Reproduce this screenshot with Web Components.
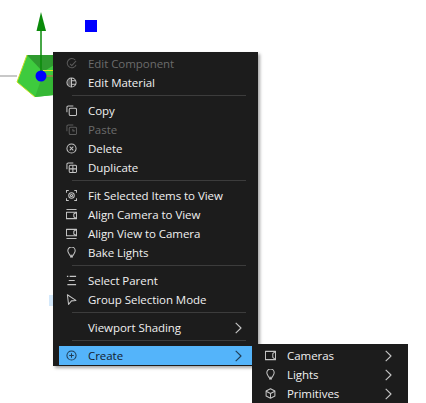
<!DOCTYPE html>
<html>
<head>
<meta charset="utf-8">
<style>
  html, body { margin: 0; background: #fff; }
  body { width: 426px; height: 403px; overflow: hidden; position: relative; font-family: "Open Sans", "Noto Sans", sans-serif; }
</style>
</head>
<body>
<scene-view></scene-view>
<context-menu style="left:53px;top:52px;width:205px">
  <menu-item icon="edit" disabled>Edit Component</menu-item>
  <menu-item icon="material">Edit Material</menu-item>
  <menu-sep></menu-sep>
  <menu-item icon="copy">Copy</menu-item>
  <menu-item icon="paste" disabled>Paste</menu-item>
  <menu-item icon="delete">Delete</menu-item>
  <menu-item icon="duplicate">Duplicate</menu-item>
  <menu-sep></menu-sep>
  <menu-item icon="fit">Fit Selected Items to View</menu-item>
  <menu-item icon="camview">Align Camera to View</menu-item>
  <menu-item icon="viewcam">Align View to Camera</menu-item>
  <menu-item icon="bulb">Bake Lights</menu-item>
  <menu-sep></menu-sep>
  <menu-item icon="parent">Select Parent</menu-item>
  <menu-item icon="group">Group Selection Mode</menu-item>
  <menu-sep></menu-sep>
  <menu-item arrow>Viewport Shading</menu-item>
  <menu-sep></menu-sep>
  <menu-item icon="create" arrow active>Create</menu-item>
</context-menu>
<context-menu style="left:252px;top:344px;width:156px" sub>
  <menu-item icon="camera" arrow>Cameras</menu-item>
  <menu-item icon="bulb" arrow>Lights</menu-item>
  <menu-item icon="cube" arrow>Primitives</menu-item>
</context-menu>
<script>
(() => {
  const ICONS = {
    edit: '<path d="M10 2.2A5 5 0 1 0 11 7.5"/><path d="M4.5 6.5 6.3 8.3 11 3.2"/>',
    material: '<circle cx="6" cy="6" r="5"/><path d="M6 1v10M6 4h4.600M6 8h4.600"/><path d="M6 1.500a4.500 4.500 0 0 0 0 9z" fill="currentColor" fill-opacity=".35" stroke="none"/>',
    copy: '<path d="M1 8V2.500A1.500 1.500 0 0 1 2.500 1H8"/><rect x="3.500" y="3.500" width="8" height="8" rx="1.500"/>',
    paste: '<path d="M1 8V2.500A1.500 1.500 0 0 1 2.500 1H8"/><rect x="3.500" y="3.500" width="8" height="8" rx="1.500"/><path d="M7.500 5.500V7.500H9.500"/>',
    delete: '<circle cx="6" cy="6" r="5"/><path d="M4 4 8 8M8 4 4 8"/>',
    duplicate: '<path d="M1 8V2.500A1.500 1.500 0 0 1 2.500 1H8"/><rect x="3.500" y="3.500" width="8" height="8" rx="1.500"/><path d="M7.500 3.500v8M3.500 7.500h8"/>',
    fit: '<path d="M.5 3V.5H3M9 .5h2.500V3M.5 9v2.500H3M9 11.500h2.500V9"/><circle cx="6" cy="6" r="3"/><circle cx="6" cy="6" r="1.200"/>',
    camview: '<path d="M.5 .5h11"/><path d="M.5 3.500h11v7H.5z"/><path d="M11.500 3.500 8.500 5.500v3l3 2"/>',
    viewcam: '<path d="M.5 11.500h11"/><path d="M.5 1.500h11v7H.5z"/><path d="M11.500 1.500 8.500 3.500v3l3 2"/>',
    bulb: '<path d="M2 4a4 4 0 0 1 8 0c0 2-1.500 3-2 5H4C3.500 7 2 6 2 4z"/><path d="M4.500 10.500h3" stroke-width="2"/>',
    parent: '<path d="M1 1.500h1.500M4 1.500h7M3 6h6.500M1.500 10.500h9.500"/>',
    group: '<path d="M1.500 .8 10.800 7 6 7.500 2.800 11.300z"/>',
    create: '<circle cx="6" cy="6" r="5"/><path d="M3.500 6h5M6 3.500v5"/>',
    camera: '<path d="M.5 1.500h11v9H.5z"/><path d="M11.500 1.500 8.500 4v4l3 2.500"/>',
    cube: '<path d="M6 .8 10.800 3.200V8.800L6 11.200 1.200 8.800V3.200z"/><path d="M1.200 3.500 6 6 10.800 3.500M6 6V11"/>',
  };

  const menuItemTemplate = document.createElement("template");
  menuItemTemplate.innerHTML = `
    <style>
      :host {
        display: flex;
        align-items: center;
        height: 19px;
        color: #f0f0f0;
        font-size: 11.5px;
        letter-spacing: -.05px;
        line-height: 19px;
        white-space: nowrap;
      }
      :host([disabled]) { color: #6b6b6b; }
      :host([active]) { background: #54b4fa; color: #14202c; }
      .icon { flex: 0 0 var(--icon-col, 29px); display: flex; padding-left: var(--icon-pad, 7px); box-sizing: border-box; }
      svg { width: 11px; height: 11px; fill: none; stroke: currentColor; stroke-width: 1.100; stroke-linejoin: round; display: block; opacity: .8; }
      .label { flex: 1; }
      .arrow { flex: 0 0 auto; margin-right: var(--arrow-end, 10px); width: 7px; height: 12px; }
    </style>
    <span class="icon"></span>
    <span class="label"><slot></slot></span>
  `;

  class MenuItem extends HTMLElement {
    connectedCallback() {
      if (this.shadowRoot) return;
      this.attachShadow({ mode: "open" }).appendChild(menuItemTemplate.content.cloneNode(true));
      const icon = ICONS[this.getAttribute("icon")];
      if (icon) {
        this.shadowRoot.querySelector(".icon").innerHTML = `<svg viewBox="0 0 12 12">${icon}</svg>`;
      }
      if (this.hasAttribute("arrow")) {
        this.shadowRoot.appendChild(document.createRange().createContextualFragment(
          '<svg class="arrow" viewBox="0 0 7 12"><path d="M.7 .8 6 6 .7 11.200"/></svg>'
        ));
      }
    }
  }

  class MenuSep extends HTMLElement {
    connectedCallback() {
      if (this.shadowRoot) return;
      this.attachShadow({ mode: "open" }).innerHTML = `
        <style>
          :host { display: block; height: 1px; margin: 3px 6px 5px 13px; background: #3c3c3c; }
        </style>
      `;
    }
  }

  class ContextMenu extends HTMLElement {
    connectedCallback() {
      if (this.shadowRoot) return;
      this.attachShadow({ mode: "open" }).innerHTML = `
        <style>
          :host {
            display: block;
            position: absolute;
            background: #1c1c1c;
            box-shadow: 2px 2px 3px rgba(0, 0, 0, .35);
            box-sizing: border-box;
            padding: 2px 6px 1px;
          }
          :host([sub]) {
            padding: 2px 0 0;
            box-shadow: none;
            --icon-col: 35px;
            --icon-pad: 13px;
            --arrow-end: 16px;
          }
        </style>
        <slot></slot>
      `;
    }
  }

  class SceneView extends HTMLElement {
    connectedCallback() {
      if (this.shadowRoot) return;
      this.attachShadow({ mode: "open" }).innerHTML = `
        <style>
          :host { display: block; position: absolute; inset: 0; }
          svg { display: block; }
        </style>
        <svg width="426" height="403" viewBox="0 0 426 403">
          <rect x="49" y="295" width="5" height="11" fill="#d5e9fb"/>
          <path d="M0 76H17" stroke="#c8c8c8" stroke-width="2"/>
          <path d="M27 55 17 82 35 97 54 95V55z" fill="#3ecb3e"/>
          <path d="M42 77 35 97 54 95V77z" fill="#35b835"/>
          <path d="M27 55H54V65L43 72z" fill="#2f9a2f"/>
          <path d="M27 55 17 82 35 97" fill="none" stroke="#c8e020" stroke-width="1"/>
          <path d="M43 70.500H54" stroke="#e8e020" stroke-width="1"/>
          <path d="M41 76H54" stroke="#d85050" stroke-width="1"/>
          <path d="M41 30V76" stroke="#0a8a0a" stroke-width="1.500"/>
          <path d="M41 12 36.500 31H46z" fill="#0a8a0a"/>
          <circle cx="41" cy="76" r="5.500" fill="#0000ff"/>
          <rect x="85" y="20" width="12" height="12" fill="#0000ff"/>
        </svg>
      `;
    }
  }

  customElements.define("menu-item", MenuItem);
  customElements.define("menu-sep", MenuSep);
  customElements.define("context-menu", ContextMenu);
  customElements.define("scene-view", SceneView);
})();
</script>
</body>
</html>
